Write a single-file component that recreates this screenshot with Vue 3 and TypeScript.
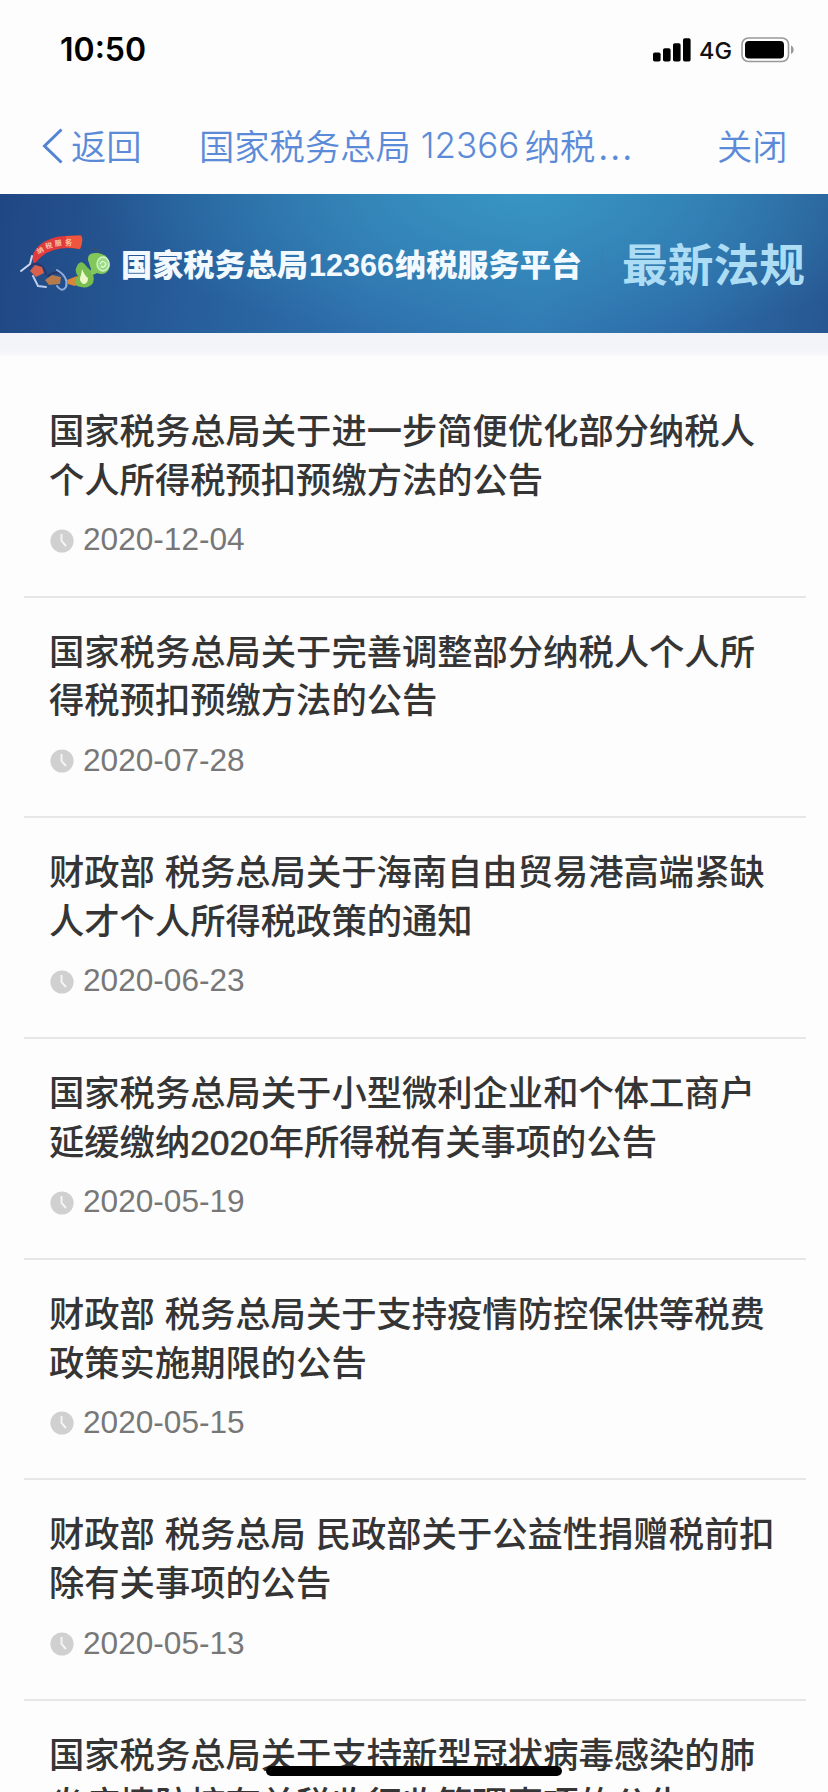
<script setup lang="ts">
interface Notice {
  lines: string[]
  date: string
}

const notices: Notice[] = [
  { lines: ['国家税务总局关于进一步简便优化部分纳税人', '个人所得税预扣预缴方法的公告'], date: '2020-12-04' },
  { lines: ['国家税务总局关于完善调整部分纳税人个人所', '得税预扣预缴方法的公告'], date: '2020-07-28' },
  { lines: ['财政部 税务总局关于海南自由贸易港高端紧缺', '人才个人所得税政策的通知'], date: '2020-06-23' },
  { lines: ['国家税务总局关于小型微利企业和个体工商户', '延缓缴纳2020年所得税有关事项的公告'], date: '2020-05-19' },
  { lines: ['财政部 税务总局关于支持疫情防控保供等税费', '政策实施期限的公告'], date: '2020-05-15' },
  { lines: ['财政部 税务总局 民政部关于公益性捐赠税前扣', '除有关事项的公告'], date: '2020-05-13' },
  { lines: ['国家税务总局关于支持新型冠状病毒感染的肺', '炎疫情防控有关税收征收管理事项的公告'], date: '' },
]

// Separates runs of digits so they can carry a medium weight.
const parts = (line: string): string[] => line.split(/(\d+)/).filter(Boolean)
const isNumber = (part: string): boolean => /^\d+$/.test(part)
</script>

<template>
  <div class="screen">
    <header class="status">
      <span class="time">10:50</span>
      <div class="indicators">
        <svg class="signal" width="38" height="24" viewBox="0 0 38 24">
          <rect x="0" y="14.5" width="7.6" height="9" rx="1.8" />
          <rect x="10" y="10.3" width="7.6" height="13.2" rx="1.8" />
          <rect x="20" y="5.3" width="7.6" height="18.2" rx="1.8" />
          <rect x="30" y="0.3" width="7.6" height="23.2" rx="1.8" />
        </svg>
        <span class="network">4G</span>
        <svg class="battery" width="54" height="26" viewBox="0 0 54 26">
          <rect x="1" y="1" width="46.5" height="23.5" rx="6.5" fill="#fff" stroke="#999" stroke-width="1.6" />
          <rect x="4" y="4" width="39" height="17.5" rx="3.8" fill="#000" />
          <path d="M50 8.5c3.6 1.6 3.6 7 0 8.6z" fill="#999" />
        </svg>
      </div>
    </header>

    <nav class="nav">
      <a class="back">
        <svg width="22" height="36" viewBox="0 0 22 36">
          <path d="M19.5 1.5L2.5 18L19.5 34.5" fill="none" stroke="#5383d2" stroke-width="3" />
        </svg>
        <span>返回</span>
      </a>
      <h1 class="nav-title"><span>国家税务总局</span><span class="num">12366</span><span>纳税</span><span class="dots">...</span></h1>
      <a class="close">关闭</a>
    </nav>

    <section class="banner">
      <svg width="828" height="139" viewBox="0 0 828 139">
        <path d="M32 64C35 50 50 43 64 42L81 41.500Q84 46 80 55Q55 51 41 63L34 70Z" fill="#df3b3c" />
        <path d="M66 42L81 41.500Q84 46 80 55L66 53Z" fill="#f0553e" />
        <g fill="#f9c2a0" font-size="7" font-weight="700">
          <text x="38" y="60" transform="rotate(-24 38 60)">纳</text>
          <text x="46" y="55" transform="rotate(-14 46 55)">税</text>
          <text x="55" y="52" transform="rotate(-7 55 52)">服</text>
          <text x="65" y="51">务</text>
        </g>
        <g fill="none" stroke-linecap="round" stroke-linejoin="round">
          <path d="M32 62L30 70L21 77" stroke="#c8d8ee" stroke-width="2" />
          <path d="M33 82L38 92L46 93" stroke="#b9cbed" stroke-width="2" />
          <path d="M30 74Q34 66 43 73L46 80" stroke="#29386d" stroke-width="2" />
          <path d="M48 82Q58 74 66 84" stroke="#263767" stroke-width="2" />
          <path d="M57 76Q69 83 66 93Q62 99 57 92" stroke="#8faedd" stroke-width="2" />
          <path d="M92 55Q100 55 102 64" stroke="#3c5264" stroke-width="1.500" />
        </g>
        <path d="M30 77L35 71L42 73L44 79L36 83Z" fill="#d8604d" />
        <path d="M45 86L52 81L61 83L60 90L49 91Z" fill="#b77a4c" />
        <path d="M67 86L77 82L81 89L75 92L68 90Z" fill="#d88739" />
        <path d="M77 72Q81 64 87 73Q96 80 93 89Q88 96 77 92Q74 86 78 82Q74 77 77 72Z" fill="#77bd50" />
        <path d="M82 75Q85 82 88 84Q88 90 83 90Q78 86 81 81Z" fill="#ecf8c7" />
        <path d="M88 66Q87 58 98 59Q110 61 110 72Q107 83 97 79Q89 84 91 75Z" fill="#83c75b" />
        <ellipse cx="103" cy="70" rx="6" ry="7" fill="#9bdc88" stroke="#d8f6cd" stroke-width="1.300" />
        <path d="M100 70Q103 65 106 70Q104 75 101 72" fill="none" stroke="#eafddf" stroke-width="1.200" />
        <g class="brand">
          <text x="121" y="82" textLength="187" lengthAdjust="spacingAndGlyphs">国家税务总局</text>
          <text class="brand-num" x="309" y="81.500" textLength="85" lengthAdjust="spacingAndGlyphs">12366</text>
          <text x="395" y="82" textLength="187" lengthAdjust="spacingAndGlyphs">纳税服务平台</text>
        </g>
        <path d="M602 51V88" stroke="#3b7caf" stroke-width="1" />
        <text class="section-name" x="622" y="87.500" textLength="183" lengthAdjust="spacingAndGlyphs">最新法规</text>
      </svg>
    </section>
    <div class="strip"></div>

    <main class="list">
      <article v-for="notice in notices" :key="notice.lines[0]" class="item">
        <h2 class="title">
          <span v-for="line in notice.lines" :key="line" class="line"><span v-for="(part, i) in parts(line)" :key="i" :class="{ digits: isNumber(part) }">{{ part }}</span></span>
        </h2>
        <div v-if="notice.date" class="meta">
          <svg width="24" height="24" viewBox="0 0 24 24">
            <circle cx="12" cy="12" r="11.600" fill="#d0d0d0" />
            <path d="M11.500 5V12L16 17" fill="none" stroke="#f6f6f6" stroke-width="1.900" />
          </svg>
          <time>{{ notice.date }}</time>
        </div>
      </article>
    </main>
    <div class="home-bar"></div>
  </div>
</template>

<style>
body {
  background: #fdfdfd;
  overflow: hidden;
}
</style>

<style scoped>
.screen {
  position: relative;
  width: 828px;
  height: 1792px;
  overflow: hidden;
  background: #fdfdfd;
  font-family: "Liberation Sans", "Noto Sans CJK SC", sans-serif;
}
.status {
  display: flex;
  justify-content: space-between;
  align-items: center;
  height: 100px;
  box-sizing: border-box;
  padding: 0 33px 0 60px;
}
.time {
  font: 600 32px/40px Inter, sans-serif;
  color: #000;
}
.indicators {
  display: flex;
  align-items: center;
}
.network {
  margin: 2px 10px 0 8px;
  width: 32px;
  font: 500 23.5px/28px Inter, sans-serif;
  color: #111;
}
.nav {
  display: flex;
  align-items: center;
  box-sizing: border-box;
  height: 94px;
  padding-bottom: 5px;
  color: #5b8bd8;
  font-family: "Noto Sans CJK SC", sans-serif;
  font-weight: 350;
  font-size: 35.3px;
  line-height: 50px;
  white-space: nowrap;
}
.back {
  display: flex;
  align-items: center;
  width: 157px;
  padding-left: 42px;
}
.back svg {
  margin-top: 2px;
}
.back span {
  margin-left: 7px;
}
.nav-title {
  display: flex;
  margin: 0;
  width: 518px;
  font-size: inherit;
  font-weight: inherit;
}
.num {
  width: 104px;
  margin-left: 10px;
  font-family: Inter, sans-serif;
  font-weight: 300;
  font-size: 35px;
  letter-spacing: 0;
}
.dots {
  letter-spacing: 2.5px;
  margin-left: 3px;
}
.banner {
  height: 139px;
  background:
    radial-gradient(ellipse 430px 150px at 520px 0, rgba(58, 158, 200, 0.75), rgba(58, 158, 200, 0)),
    linear-gradient(97deg, #204783 0%, #265c99 22%, #2e6fab 45%, #3179b2 65%, #2c6aa6 84%, #275792 100%);
}
.banner svg {
  display: block;
  font-family: "Noto Sans CJK SC", sans-serif;
}
.brand {
  fill: #f3faff;
  font-size: 31px;
  font-weight: 900;
}
.brand-num {
  font-family: "Liberation Sans", sans-serif;
  font-size: 31px;
  font-weight: 700;
}
.section-name {
  fill: #addcf5;
  font-size: 45px;
  font-weight: 700;
}
.strip {
  height: 23px;
  background: linear-gradient(#f3f4f9 75%, #fafafc);
}
.list {
  padding: 21px 22px 0 24px;
}
.item {
  box-sizing: border-box;
  height: 220.7px;
  padding: 31px 0 0 25px;
  border-bottom: 2px solid #e6e7e9;
}
.title {
  margin: 0;
  color: #353535;
  font-size: 35.3px;
  font-weight: 500;
  line-height: 48.8px;
}
.line {
  display: block;
  white-space: nowrap;
}
.digits {
  -webkit-text-stroke: 0.7px #353535;
}
.meta {
  display: flex;
  align-items: center;
  gap: 9px;
  height: 36px;
  margin-top: 16px;
  padding-left: 1px;
  color: #777;
  font-size: 31.6px;
}
.meta svg {
  margin-top: 2px;
}
.home-bar {
  position: absolute;
  left: 266px;
  bottom: 16px;
  width: 296px;
  height: 10px;
  border-radius: 5px;
  background: #000;
}
</style>
